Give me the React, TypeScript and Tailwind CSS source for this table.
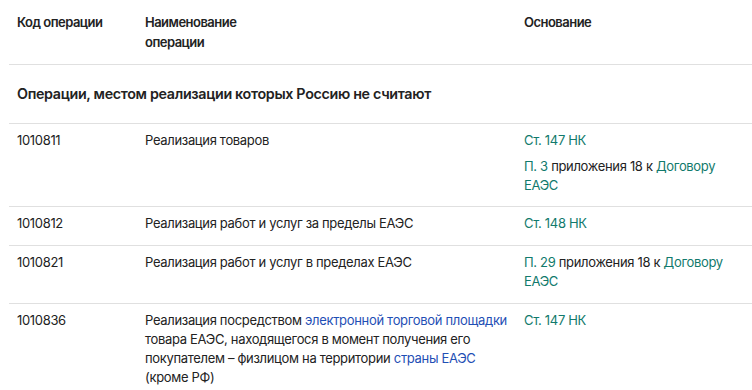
import React from "react";

const G = "text-[#117a6c]";
const B = "text-[#1f4fb5]";

function Row({ code, name, basis, last, first }: { code: string; name: React.ReactNode; basis: React.ReactNode; last?: boolean; first?: boolean }) {
  return (
    <div className={`grid grid-cols-[128px_379px_1fr] pt-[7px] ${first ? "pb-[11px]" : "pb-[12px]"} ${last ? "" : "border-b border-[#e0e0e0]"}`}>
      <div className="pl-2">{code}</div>
      <div className="pl-2">{name}</div>
      <div className="pl-2 pr-3">{basis}</div>
    </div>
  );
}

export default function App() {
  return (
    <div className="w-[752px] h-[390px] overflow-hidden bg-white pl-[9px] text-[13px] leading-[19px] tracking-[-0.025em] text-[#222222]" style={{ fontFamily: "Inter, 'Liberation Sans', sans-serif" }}>
      <div className="grid grid-cols-[128px_379px_1fr] pt-[12px] pb-[12px] border-b border-[#e0e0e0] font-semibold leading-[20px] tracking-[-0.04em]">
        <div className="pl-2">Код операции</div>
        <div className="pl-2">Наименование<br />операции</div>
        <div className="pl-2">Основание</div>
      </div>
      <div className="py-[19px] border-b border-[#e0e0e0] pl-2 text-[14.3px] leading-[20px] font-semibold">
        Операции, местом реализации которых Россию не считают
      </div>
      <Row
        first
        code="1010811"
        name="Реализация товаров"
        basis={
          <>
            <div className={G}>Ст. 147 НК</div>
            <div className="mt-[7px]">
              <span className={G}>П. 3</span> приложения 18 к <span className={G}>Договору ЕАЭС</span>
            </div>
          </>
        }
      />
      <Row code="1010812" name="Реализация работ и услуг за пределы ЕАЭС" basis={<div className={G}>Ст. 148 НК</div>} />
      <Row
        code="1010821"
        name="Реализация работ и услуг в пределах ЕАЭС"
        basis={
          <div>
            <span className={G}>П. 29</span> приложения 18 к <span className={G}>Договору ЕАЭС</span>
          </div>
        }
      />
      <Row
        code="1010836"
        last
        name={
          <>
            Реализация посредством <span className={B}>электронной торговой площадки</span> товара ЕАЭС, находящегося в момент получения его покупателем – физлицом на территории <span className={B}>страны ЕАЭС</span> (кроме РФ)
          </>
        }
        basis={<div className={G}>Ст. 147 НК</div>}
      />
    </div>
  );
}
